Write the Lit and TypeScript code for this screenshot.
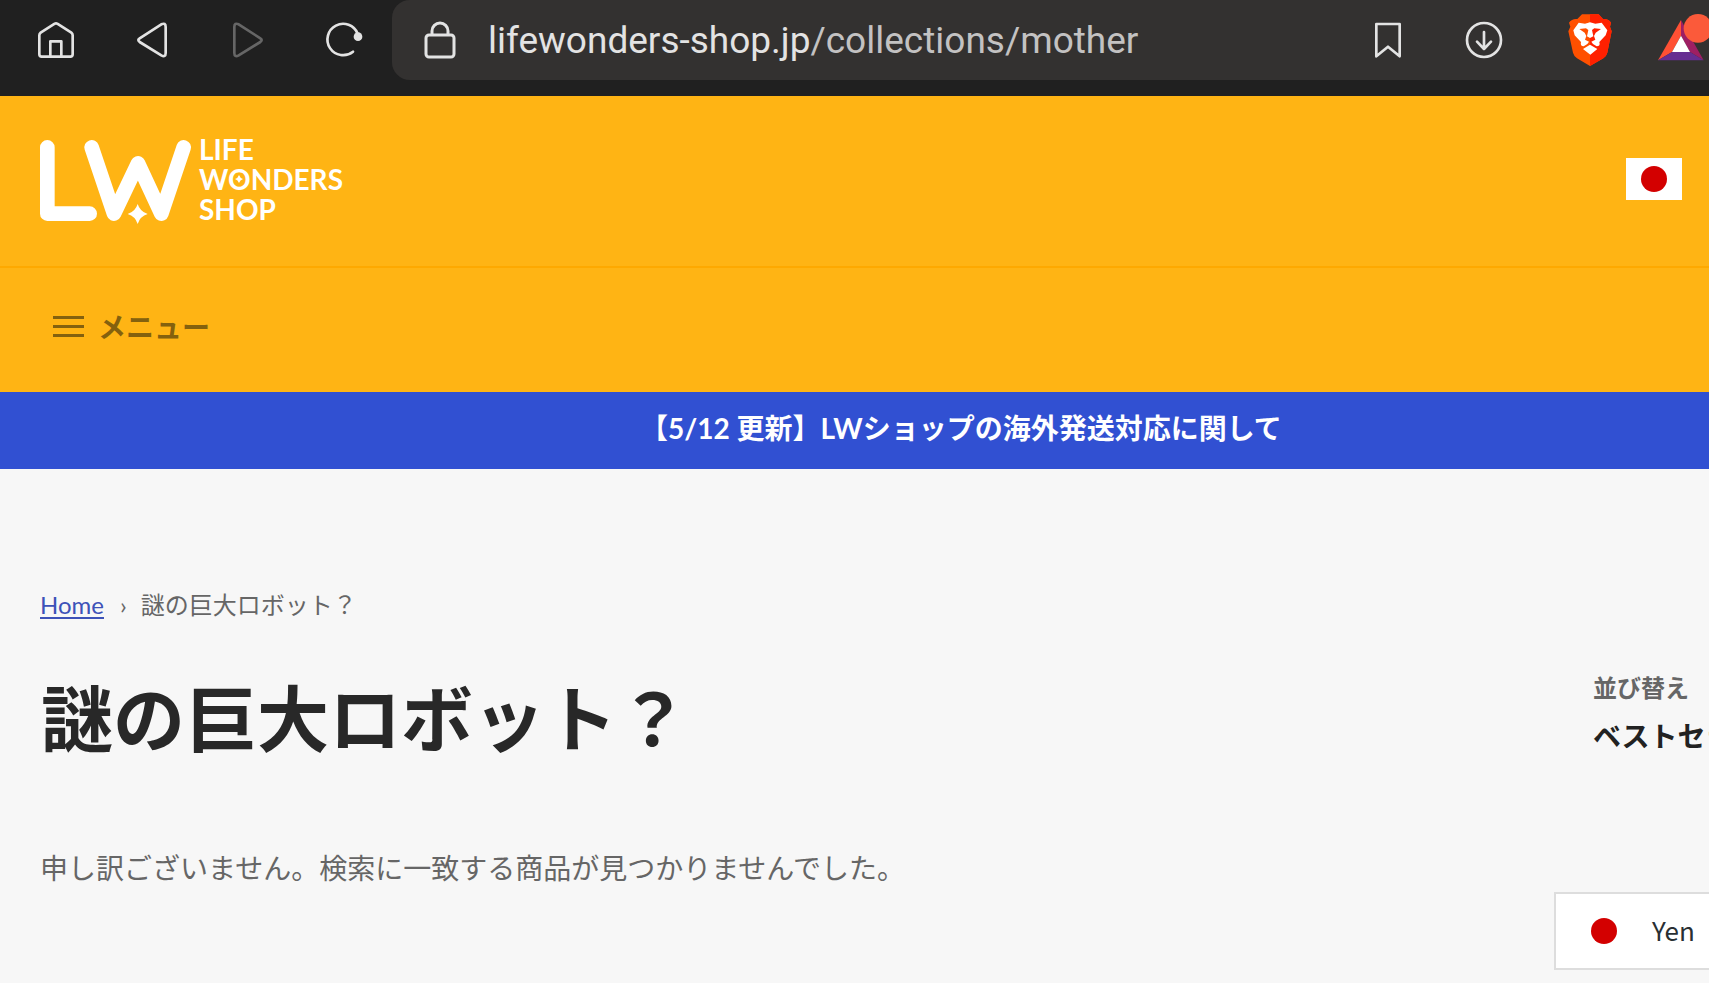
import { LitElement, html, css } from "lit";
import { customElement, state } from "lit/decorators.js";

@customElement("browser-bar")
class BrowserBar extends LitElement {
  static styles = css`
    :host {
      display: block;
    }
    .bar {
      display: flex;
      height: 96px;
      padding-left: 8px;
      background: #202020;
      color: #e3e3e3;
    }
    button {
      display: flex;
      align-items: center;
      justify-content: center;
      flex: none;
      width: 96px;
      height: 80px;
      padding: 0;
      border: 0;
      background: none;
      color: inherit;
    }
    button:disabled {
      color: #666;
    }
    .location {
      display: flex;
      align-items: center;
      flex: 1;
      min-width: 0;
      height: 80px;
      border-radius: 18px 0 0 18px;
      background: #333130;
    }
    .address {
      flex: 1;
      min-width: 0;
      padding-top: 2px;
      overflow: hidden;
      white-space: nowrap;
      font: 37px/48px Roboto, sans-serif;
      color: #e3e3e3;
    }
    .path {
      color: #c3c2c2;
    }
    .shields {
      width: 116px;
    }
    .rewards {
      justify-content: flex-start;
      width: 61px;
      padding: 0 0 4px 10px;
    }
    svg {
      display: block;
      flex: none;
      overflow: visible;
      fill: none;
    }
    .line {
      stroke: currentColor;
      stroke-width: 8;
      stroke-linecap: round;
      stroke-linejoin: round;
    }
    .dot {
      fill: currentColor;
    }
  `;

  render() {
    return html`
      <nav class="bar" aria-label="Browser">
        <button aria-label="Home">
          <svg width="36" height="36" viewBox="115 66 108 108" class="line">
            <path d="M123 98 L164 71.500 Q169 69 174 71.500 L215 98 Q219 101 219 106 V163 Q219 170 212 170 H126 Q119 170 119 163 V106 Q119 101 123 98 Z M152 168 V124 H185 V168" />
          </svg>
        </button>
        <button aria-label="Back">
          <svg width="30" height="36" viewBox="412 66 90 106" class="line">
            <path d="M420 114 L485 72 Q498 66 498 80 V158 Q498 172 485 165 L420 125 Q412 119 420 114 Z" />
          </svg>
        </button>
        <button aria-label="Forward" disabled>
          <svg width="30" height="36" viewBox="698 66 90 106" class="line">
            <path d="M780 114 L715 72 Q702 66 702 80 V158 Q702 172 715 165 L780 125 Q788 119 780 114 Z" />
          </svg>
        </button>
        <button aria-label="Reload">
          <svg width="36" height="36" viewBox="980 66 108 108">
            <path class="line" d="M1075 101 A47 47 0 1 0 1061 155" />
            <circle class="dot" cx="1076" cy="110" r="13" />
          </svg>
        </button>
        <div class="location">
          <button aria-label="Site information">
            <svg width="32" height="36" viewBox="-1 0 32 36">
              <g stroke="currentColor" stroke-width="3">
                <rect x="1" y="13" width="28" height="22" rx="3" />
                <path d="M7 13 V9 a8 8 0 0 1 16 0 V13" />
              </g>
            </svg>
          </button>
          <div class="address">lifewonders-shop.jp<span class="path">/collections/mother</span></div>
          <button aria-label="Bookmark">
            <svg width="26" height="36" viewBox="105 68 78 106" class="line">
              <path d="M109 73 H179 V170 L144 141 L109 170 Z" />
            </svg>
          </button>
          <button aria-label="Download">
            <svg width="36" height="36" viewBox="379 66 108 108" class="line">
              <circle cx="433" cy="120" r="51" />
              <path d="M433 96 V147 M412 125 L433 147 L454 125" />
            </svg>
          </button>
          <button class="shields" aria-label="Shields">
            <svg width="44" height="52" viewBox="686 42 132 156">
              <path fill="#ff5000" d="M728 43 H778 L791 57 Q807 55 815 68 L812 80 L817 94 L804 158 Q801 169 792 175 L752 198 L713 175 Q704 169 701 158 L687 94 L693 80 L689 68 Q698 55 714 57 Z" />
              <path fill="#ff2000" d="M752 43 H778 L791 57 Q807 55 815 68 L812 80 L817 94 L804 158 Q801 169 792 175 L752 198 Z" />
              <path fill="#fff" d="M718 68 L737 71 L752 67 L768 71 L787 68 L804 91 L799 106 L780 126 Q784 139 772 139 L761 132 L756 125 L768 119 L764 108 L769 98 L785 87 L765 85 L758 90 L762 109 L752 114 L743 109 L747 90 L740 85 L720 87 L736 98 L741 108 L737 119 L749 125 L744 132 L733 139 Q722 139 725 126 L706 106 L702 91 Z M752 134 L774 147 L753 164 L731 147 Z" />
            </svg>
          </button>
          <button class="rewards" aria-label="Rewards">
            <svg width="52" height="48" viewBox="954 41 156 144">
              <path fill="#ff5034" d="M1023 59 V106 L996 155 L954 180 Z" />
              <path fill="#9e1f63" d="M1023 59 L1091 180 L1050 155 L1023 106 Z" />
              <path fill="#662d91" d="M954 180 L996 155 H1050 L1091 180 Z" />
              <path fill="#fff" d="M1023 106 L1050 155 H996 Z" />
              <circle fill="#fb5a3a" cx="1074" cy="84" r="43" />
            </svg>
          </button>
        </div>
      </nav>
    `;
  }
}

@customElement("shop-header")
class ShopHeader extends LitElement {
  static styles = css`
    :host {
      display: block;
      font-family: Lato, "Noto Sans CJK JP", sans-serif;
    }
    .header {
      background: #ffb414;
    }
    .brand-row {
      display: flex;
      align-items: center;
      justify-content: space-between;
      height: 166px;
      padding: 0 27px 4px 40px;
      border-bottom: 2px solid #fea900;
    }
    .logo {
      display: flex;
      align-items: flex-end;
      gap: 8px;
      color: #fff;
      text-decoration: none;
      font-size: 28px;
      font-weight: 700;
      line-height: 30px;
    }
    .logo-name {
      display: block;
    }
    .logo-line {
      display: block;
    }
    .ring {
      position: relative;
    }
    .spark {
      position: absolute;
      left: 50%;
      top: 50%;
      width: 8px;
      height: 8px;
      margin: -4px;
    }
    svg {
      display: block;
      flex: none;
      overflow: visible;
    }
    button {
      padding: 0;
      border: 0;
      background: none;
      font: inherit;
      color: inherit;
    }
    .menu-row {
      display: flex;
      align-items: center;
      height: 124px;
      padding-left: 53px;
    }
    .menu {
      display: flex;
      align-items: center;
      gap: 14px;
      color: #84610e;
      font-size: 28px;
      line-height: 40px;
      padding-bottom: 6px;
    }
    .menu-label {
      font-weight: 700;
    }
    .notice {
      display: block;
      padding: 16px 0 21px 640px;
      background: #3150d2;
      color: #fff;
      font-size: 28px;
      font-weight: 700;
      line-height: 40px;
      text-decoration: none;
      white-space: nowrap;
    }
  `;

  render() {
    return html`
      <header class="header">
        <div class="brand-row">
          <a class="logo" href="#">
            <svg width="151" height="84" viewBox="60 57 453 252">
              <g fill="none" stroke="#fff" stroke-width="44" stroke-linecap="round" stroke-linejoin="round">
                <path d="M82 79 V278 H209" />
                <path d="M215 79 L282 278 L354 127 L424 278 L491 79" />
              </g>
              <path d="M353 241 Q361 271 391 279 Q361 287 353 317 Q345 287 315 279 Q345 271 353 241 Z" fill="#ffb414" />
              <path d="M353 249 Q360 272 383 279 Q360 286 353 309 Q346 286 323 279 Q346 272 353 249 Z" fill="#fff" />
            </svg>
            <span class="logo-name">
              <span class="logo-line">LIFE</span>
              <span class="logo-line">W<span class="ring">O<svg class="spark" viewBox="0 0 8 8"><path d="M4 0 Q5 3 8 4 Q5 5 4 8 Q3 5 0 4 Q3 3 4 0 Z" fill="#fff" /></svg></span>NDERS</span>
              <span class="logo-line">SHOP</span>
            </span>
          </a>
          <button aria-label="Japan">
            <svg width="56" height="42" viewBox="0 0 56 42">
              <rect width="56" height="42" fill="#fff" />
              <circle cx="28" cy="21" r="13" fill="#d30000" />
            </svg>
          </button>
        </div>
        <div class="menu-row">
          <button class="menu">
            <svg width="31" height="22" viewBox="0 0 31 22" fill="currentColor">
              <rect width="31" height="3" />
              <rect y="9" width="31" height="3" />
              <rect y="18" width="31" height="3" />
            </svg>
            <span class="menu-label">メニュー</span>
          </button>
        </div>
      </header>
      <a class="notice" href="#">【5/12 更新】LWショップの海外発送対応に関して</a>
    `;
  }
}

@customElement("shop-collection")
class ShopCollection extends LitElement {
  static styles = css`
    :host {
      display: block;
      padding: 116px 0 0 40px;
      font-family: Lato, "Noto Sans CJK JP", sans-serif;
      color: #666;
    }
    .crumbs {
      display: flex;
      gap: 16px;
      font-size: 24px;
      line-height: 40px;
    }
    .crumbs a {
      color: #3d52b8;
      text-decoration-thickness: 2px;
      text-underline-offset: 3px;
    }
    .current {
      margin-left: -2px;
    }
    .heading-row {
      display: flex;
      justify-content: space-between;
      margin-top: 41px;
    }
    h1 {
      margin: 0;
      padding-left: 1px;
      color: #282828;
      font-size: 72px;
      font-weight: 700;
      line-height: 104px;
    }
    .sort {
      display: flex;
      flex-direction: column;
      gap: 8px;
      width: 116px;
      padding-top: 2px;
      font-size: 24px;
      font-weight: 700;
      line-height: 40px;
      white-space: nowrap;
    }
    select {
      width: 200px;
      height: 40px;
      padding: 0;
      border: 0;
      appearance: none;
      background: none;
      color: #222;
      font: inherit;
      font-size: 28px;
    }
    .empty {
      margin: 78px 0 0;
      font-size: 28px;
      line-height: 40px;
    }
  `;

  @state() private heading = "謎の巨大ロボット？";

  render() {
    return html`
      <nav class="crumbs" aria-label="Breadcrumb">
        <a href="#">Home</a><span>›</span><span class="current">${this.heading}</span>
      </nav>
      <div class="heading-row">
        <h1>${this.heading}</h1>
        <div class="sort">
          <label for="sort">並び替え</label>
          <select id="sort">
            <option>ベストセラー</option>
          </select>
        </div>
      </div>
      <p class="empty">申し訳ございません。検索に一致する商品が見つかりませんでした。</p>
    `;
  }
}

@customElement("app-root")
class AppRoot extends LitElement {
  static styles = css`
    :host {
      display: block;
      position: relative;
      min-height: 100vh;
      overflow: hidden;
      background: #f7f7f7;
    }
    .currency {
      position: absolute;
      right: 0;
      bottom: 13px;
      display: flex;
      align-items: center;
      gap: 35px;
      width: 155px;
      height: 78px;
      padding: 0 0 0 35px;
      border: 2px solid #ddd;
      border-right: 0;
      background: #fff;
      color: #292f33;
      font: 26px/40px "Noto Sans CJK JP", sans-serif;
    }
    .currency-name {
      padding-bottom: 2px;
    }
  `;

  render() {
    return html`
      <browser-bar></browser-bar>
      <shop-header></shop-header>
      <main><shop-collection></shop-collection></main>
      <button class="currency">
        <svg width="26" height="26" viewBox="0 0 26 26"><circle cx="13" cy="13" r="13" fill="#d30000" /></svg>
        <span class="currency-name">Yen</span>
      </button>
    `;
  }
}
